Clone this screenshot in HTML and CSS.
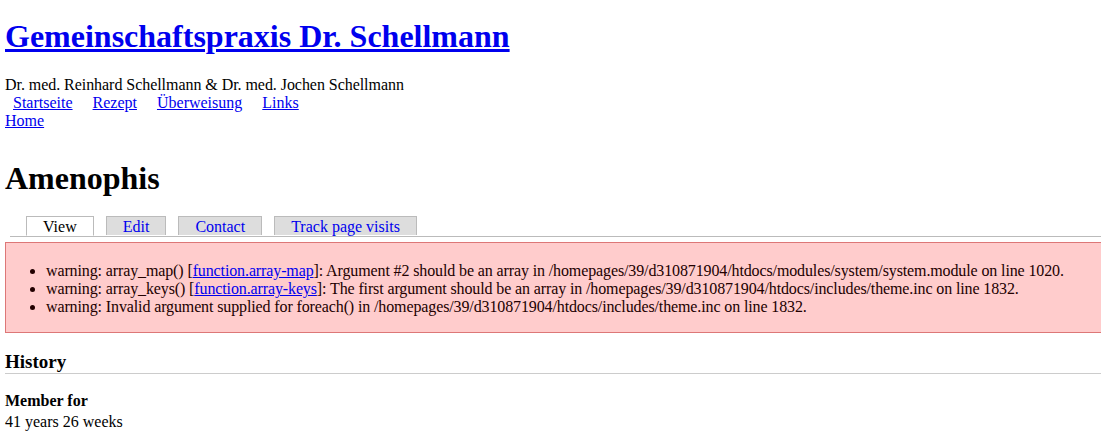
FILE: index.html
```html
<!DOCTYPE html>
<html>
<head>
<meta charset="utf-8">
<title>Amenophis | Gemeinschaftspraxis Dr. Schellmann</title>
<link rel="stylesheet" href="styles.css">
</head>
<body>
<div class="page">
  <h1 class="site-name"><a href="#">Gemeinschaftspraxis Dr. Schellmann</a></h1>
  <div class="slogan">Dr. med. Reinhard Schellmann &amp; Dr. med. Jochen Schellmann</div>
  <ul class="links">
    <li><a href="#">Startseite</a></li>
    <li><a href="#">Rezept</a></li>
    <li><a href="#">Überweisung</a></li>
    <li><a href="#">Links</a></li>
  </ul>
  <div class="breadcrumb"><a href="#">Home</a></div>
  <h1 class="title">Amenophis</h1>
  <ul class="tabs">
    <li class="active"><a href="#">View</a></li>
    <li><a href="#">Edit</a></li>
    <li><a href="#">Contact</a></li>
    <li><a href="#">Track page visits</a></li>
  </ul>
  <div class="messages">
    <ul>
      <li>warning: array_map() [<a href="#">function.array-map</a>]: Argument #2 should be an array in /homepages/39/d310871904/htdocs/modules/system/system.module on line 1020.</li>
      <li>warning: array_keys() [<a href="#">function.array-keys</a>]: The first argument should be an array in /homepages/39/d310871904/htdocs/includes/theme.inc on line 1832.</li>
      <li>warning: Invalid argument supplied for foreach() in /homepages/39/d310871904/htdocs/includes/theme.inc on line 1832.</li>
    </ul>
  </div>
  <div class="profile">
    <h2>History</h2>
    <dl>
      <dt>Member for</dt>
      <dd>41 years 26 weeks</dd>
    </dl>
  </div>
</div>
</body>
</html>
```
FILE: styles.css
```css
html, body {
  margin: 0;
  padding: 0;
  overflow-x: hidden;
}
body {
  font-family: "Liberation Serif", "Times New Roman", serif;
  font-size: 16px;
  line-height: 18px;
  color: #000;
  background: #fff;
}
a {
  color: #00e;
}
.page {
  padding: 0 0 0 5px;
}
.site-name {
  font-size: 32px;
  line-height: 37px;
  margin: 18px 0 21px;
}
.slogan {
  margin: 0;
  letter-spacing: -0.05px;
}
.links {
  list-style: none;
  margin: 0;
  padding: 0;
}
.links li {
  display: inline;
  padding: 0 0.5em;
}
.title {
  font-size: 32px;
  line-height: 37px;
  margin: 30px 0 21px;
}
.tabs {
  list-style: none;
  margin: 0 0 5px 5px;
  padding: 0 0 0 16px;
  white-space: nowrap;
  border-bottom: 1px solid #bbb;
  line-height: 18px;
}
.tabs li {
  display: inline;
}
.tabs a {
  background: #ddd;
  border: 1px solid #bbb;
  border-bottom: none;
  padding: 1px 16px 0;
  margin-right: 8px;
  text-decoration: none;
  color: #00e;
}
.tabs li.active a {
  background: #fff;
  color: #000;
  border-bottom: 1px solid #fff;
}
.messages {
  background: #fcc;
  border: 1px solid #d77;
  margin-right: -4px;
  padding: 3px 0 0;
}
.messages ul {
  margin: 16px 0;
  padding-left: 40px;
}
.messages li {
  color: #200;
  letter-spacing: -0.12px;
}
.profile h2 {
  font-size: 19px;
  line-height: 22px;
  margin: 18px 0 0;
  border-bottom: 1px solid #ccc;
}
.profile dl {
  margin: 18px 0;
}
.profile dt {
  font-weight: bold;
}
.profile dd {
  margin: 3px 0 0;
}
```
